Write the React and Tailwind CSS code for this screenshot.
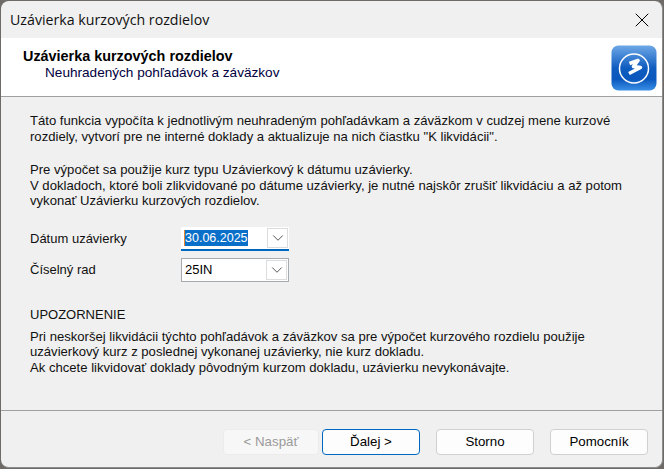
import { X, ChevronDown } from 'lucide-react'

const font = { fontFamily: '"Liberation Sans", Arial, sans-serif' }

function Logo() {
  return (
    <svg width="46" height="46" viewBox="0 0 46 46">
      <defs>
        <linearGradient id="logoBg" x1="0" y1="0" x2="0" y2="1">
          <stop offset="0" stopColor="#6ea8e6" />
          <stop offset="0.5" stopColor="#0f5cc0" />
          <stop offset="0.75" stopColor="#0a58bd" />
          <stop offset="1" stopColor="#3a8fe6" />
        </linearGradient>
      </defs>
      <rect x="0.5" y="0.5" width="45" height="45" rx="7" fill="url(#logoBg)" />
      <circle cx="23" cy="23.5" r="14.5" fill="none" stroke="#fff" strokeWidth="1.5" />
      <path d="M18.5 18.5 L27 15.5 L22.5 21.5 L29.5 22.5 L18 28.5" fill="none" stroke="#fff" strokeWidth="3.6" strokeLinejoin="round" />
    </svg>
  )
}

function Combo({ value, selected }) {
  return (
    <div className={`w-[108px] h-[24px] bg-white flex items-center justify-between pr-[1px] ${selected ? 'border-b-2 border-[#0067c0] pt-[1px]' : 'border border-[#a6abb0]'}`}>
      <span className={`ml-[3px] flex items-center leading-[16px] text-black ${selected ? 'text-[12.5px]' : 'text-[13px]'}`}>
        {selected ? <span className="bg-[#0a6fc9] text-white border-l border-[#e8872d]">{value}</span> : <span>{value}</span>}
      </span>
      <span className="w-[21px] h-[20px] bg-white border border-[#dcdcdc] flex items-center justify-center text-[#333]">
        <ChevronDown size={18} strokeWidth={1.1} />
      </span>
    </div>
  )
}

function Btn({ children, disabled, primary }) {
  let cls = 'w-[98px] bg-[#fdfdfd] border-[#d0d0d0] text-black'
  if (disabled) cls = 'w-[96px] bg-[#f7f7f7] border-[#ececec] text-[#9a9a9a]'
  if (primary) cls = 'w-[98px] bg-[#fdfdfd] border-[#0067c0] text-black'
  return (
    <div className={`h-[26px] rounded-[4px] border flex items-center justify-center text-[13.3px] ${cls}`}>
      {children}
    </div>
  )
}

export default function App() {
  return (
    <div className="w-[664px] h-[469px] bg-[#6d6a68] overflow-hidden p-[1px]" style={font}>
      <div className="h-[467px] rounded-[8px] overflow-hidden bg-[#f0f0f0] border-r border-b border-[#8c8c8c] flex flex-col text-[#111]">
        <div className="h-[37px] shrink-0 flex items-center justify-between pl-[9px] pr-[8px]">
          <span className="text-[14.2px]" style={{ fontFamily: '"Open Sans", sans-serif' }}>Uzávierka kurzových rozdielov</span>
          <X size={24} strokeWidth={1} className="text-black" />
        </div>

        <div className="h-[59px] shrink-0 bg-white border-b border-[#a0a0a0] flex justify-between items-start pl-[22px] pr-[5px]">
          <div className="pt-[10px]">
            <div className="text-[14.4px] leading-[16px] font-bold text-black">Uzávierka kurzových rozdielov</div>
            <div className="text-[13.6px] leading-[17px] text-[#000040] pl-[22px]">Neuhradených pohľadávok a záväzkov</div>
          </div>
          <div className="pt-[7px]"><Logo /></div>
        </div>

        <div className="flex-1 flex flex-col pl-[29px] pr-[20px] pt-[16px] text-[13.1px] leading-[15.6px]">
          <p>Táto funkcia vypočíta k jednotlivým neuhradeným pohľadávkam a záväzkom v cudzej mene kurzové<br />rozdiely, vytvorí pre ne interné doklady a aktualizuje na nich čiastku "K likvidácii".</p>
          <p className="mt-[18px]">Pre výpočet sa použije kurz typu Uzávierkový k dátumu uzávierky.<br />V dokladoch, ktoré boli zlikvidované po dátume uzávierky, je nutné najskôr zrušiť likvidáciu a až potom<br />vykonať Uzávierku kurzových rozdielov.</p>
          <div className="mt-[18px] flex flex-col gap-[7px] text-[13px]">
            <div className="flex items-center">
              <span className="w-[151px]">Dátum uzávierky</span>
              <Combo value="30.06.2025" selected />
            </div>
            <div className="flex items-center">
              <span className="w-[151px]">Číselný rad</span>
              <Combo value="25IN" />
            </div>
          </div>
          <p className="mt-[25px] text-[13px]">UPOZORNENIE</p>
          <p className="mt-[6px]">Pri neskoršej likvidácii týchto pohľadávok a záväzkov sa pre výpočet kurzového rozdielu použije<br />uzávierkový kurz z poslednej vykonanej uzávierky, nie kurz dokladu.<br />Ak chcete likvidovať doklady pôvodným kurzom dokladu, uzávierku nevykonávajte.</p>
        </div>

        <div className="h-[57px] shrink-0 border-t border-[#a0a0a0] flex items-start justify-end pt-[18px] pr-[14px]">
          <Btn disabled>&lt; Naspäť</Btn>
          <div className="ml-[3px]"><Btn primary>Ďalej &gt;</Btn></div>
          <div className="ml-[16px]"><Btn>Storno</Btn></div>
          <div className="ml-[16px]"><Btn>Pomocník</Btn></div>
        </div>
      </div>
    </div>
  )
}
